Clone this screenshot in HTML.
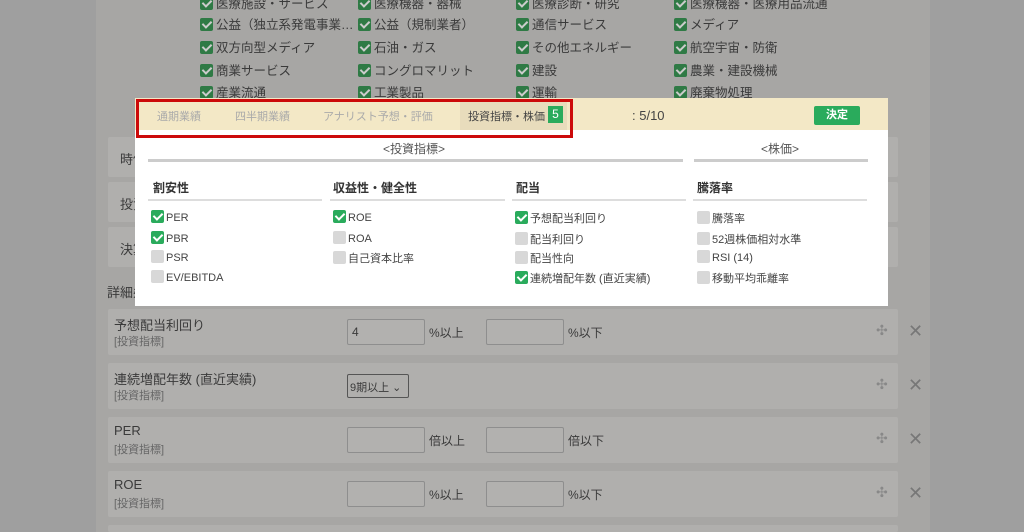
<!DOCTYPE html>
<html><head><meta charset="utf-8"><style>
*{margin:0;padding:0;box-sizing:border-box}
html,body{width:1024px;height:532px;overflow:hidden}
body{background:#9f9f9f;font-family:"Liberation Sans","Noto Sans CJK JP",sans-serif;position:relative;color:#3a3a3a}
.a{position:absolute}
.panel{left:96px;top:0;width:834px;height:532px;background:#a7a6a4}
.bg{font-size:12.5px;color:#3a3a3a;white-space:nowrap}
.gc{display:inline-block;width:13px;height:13px;background:#2f7a45;border-radius:2px;vertical-align:-2px;margin-right:3px;position:relative}
.gc:after{content:"";position:absolute;left:4px;top:1px;width:4px;height:7px;border:solid #ccc;border-width:0 2px 2px 0;transform:rotate(45deg)}
.card{left:108px;width:790px;background:#b0afad;border-radius:2px}
.inp{width:78px;height:26px;border:1px solid #8e8e8e;background:#b2b1af;border-radius:2px;font-size:12px;padding:5px 4px}
.modal{left:135px;top:98px;width:753px;height:208px;background:#fff}
.tabs{left:0;top:0;width:753px;height:32px;background:#f3e8c6;font-size:11px;color:#aaa}
.ck{display:inline-block;width:13px;height:13px;background:#d8d8d8;border-radius:2px;vertical-align:-2px;margin-right:2px;position:relative}
.ck.on{background:#2aab5c}
.ck.on:after{content:"";position:absolute;left:4px;top:1px;width:4px;height:7px;border:solid #fff;border-width:0 2px 2px 0;transform:rotate(45deg)}
.it{font-size:11px;color:#444;white-space:nowrap}
.hd{font-size:12px;font-weight:bold;color:#333}
.ul{height:2px;background:#ddd}
.mv{color:#888;font-size:14px}
.x{color:#777;font-size:18px}
</style></head><body>
<div class="a panel"></div>
<div class="a bg" style="left:200px;top:-7px"><span class="gc"></span>医療施設・サービス</div>
<div class="a bg" style="left:358px;top:-7px"><span class="gc"></span>医療機器・器械</div>
<div class="a bg" style="left:516px;top:-7px"><span class="gc"></span>医療診断・研究</div>
<div class="a bg" style="left:674px;top:-7px"><span class="gc"></span>医療機器・医療用品流通</div>
<div class="a bg" style="left:200px;top:14px"><span class="gc"></span>公益（独立系発電事業…</div>
<div class="a bg" style="left:358px;top:14px"><span class="gc"></span>公益（規制業者）</div>
<div class="a bg" style="left:516px;top:14px"><span class="gc"></span>通信サービス</div>
<div class="a bg" style="left:674px;top:14px"><span class="gc"></span>メディア</div>
<div class="a bg" style="left:200px;top:37px"><span class="gc"></span>双方向型メディア</div>
<div class="a bg" style="left:358px;top:37px"><span class="gc"></span>石油・ガス</div>
<div class="a bg" style="left:516px;top:37px"><span class="gc"></span>その他エネルギー</div>
<div class="a bg" style="left:674px;top:37px"><span class="gc"></span>航空宇宙・防衛</div>
<div class="a bg" style="left:200px;top:60px"><span class="gc"></span>商業サービス</div>
<div class="a bg" style="left:358px;top:60px"><span class="gc"></span>コングロマリット</div>
<div class="a bg" style="left:516px;top:60px"><span class="gc"></span>建設</div>
<div class="a bg" style="left:674px;top:60px"><span class="gc"></span>農業・建設機械</div>
<div class="a bg" style="left:200px;top:82px"><span class="gc"></span>産業流通</div>
<div class="a bg" style="left:358px;top:82px"><span class="gc"></span>工業製品</div>
<div class="a bg" style="left:516px;top:82px"><span class="gc"></span>運輸</div>
<div class="a bg" style="left:674px;top:82px"><span class="gc"></span>廃棄物処理</div>

<div class="a card" style="top:137px;height:40px"><span class="a" style="left:12px;top:12px;font-size:13px">時価</span></div>
<div class="a card" style="top:182px;height:40px"><span class="a" style="left:12px;top:12px;font-size:13px">投資</span></div>
<div class="a card" style="top:227px;height:40px"><span class="a" style="left:12px;top:12px;font-size:13px">決算</span></div>
<div class="a" style="left:107px;top:282px;font-size:13px">詳細条件</div>

<div class="a card" style="top:309px;height:46px">
 <div class="a" style="left:6px;top:6px;font-size:13px">予想配当利回り</div>
 <div class="a" style="left:6px;top:24px;font-size:11px;color:#666">[投資指標]</div>
 <div class="a inp" style="left:239px;top:10px">4</div><div class="a" style="left:321px;top:15px;font-size:12px">%以上</div>
 <div class="a inp" style="left:378px;top:10px"></div><div class="a" style="left:460px;top:15px;font-size:12px">%以下</div>
 <div class="a mv" style="left:768px;top:13px">✣</div>
</div>
<div class="a card" style="top:363px;height:46px">
 <div class="a" style="left:6px;top:6px;font-size:13px">連続増配年数 (直近実績)</div>
 <div class="a" style="left:6px;top:24px;font-size:11px;color:#666">[投資指標]</div>
 <div class="a" style="left:239px;top:11px;width:62px;height:24px;border:1px solid #555;border-radius:2px;font-size:11px;padding:4px 2px">9期以上 ⌄</div>
 <div class="a mv" style="left:768px;top:13px">✣</div>
</div>
<div class="a card" style="top:417px;height:46px">
 <div class="a" style="left:6px;top:6px;font-size:13px">PER</div>
 <div class="a" style="left:6px;top:24px;font-size:11px;color:#666">[投資指標]</div>
 <div class="a inp" style="left:239px;top:10px"></div><div class="a" style="left:321px;top:15px;font-size:12px">倍以上</div>
 <div class="a inp" style="left:378px;top:10px"></div><div class="a" style="left:460px;top:15px;font-size:12px">倍以下</div>
 <div class="a mv" style="left:768px;top:13px">✣</div>
</div>
<div class="a card" style="top:471px;height:46px">
 <div class="a" style="left:6px;top:6px;font-size:13px">ROE</div>
 <div class="a" style="left:6px;top:24px;font-size:11px;color:#666">[投資指標]</div>
 <div class="a inp" style="left:239px;top:10px"></div><div class="a" style="left:321px;top:15px;font-size:12px">%以上</div>
 <div class="a inp" style="left:378px;top:10px"></div><div class="a" style="left:460px;top:15px;font-size:12px">%以下</div>
 <div class="a mv" style="left:768px;top:13px">✣</div>
</div>
<div class="a card" style="top:525px;height:7px"></div>
<div class="a x" style="left:908px;top:321px">✕</div>
<div class="a x" style="left:908px;top:375px">✕</div>
<div class="a x" style="left:908px;top:429px">✕</div>
<div class="a x" style="left:908px;top:483px">✕</div>

<div class="a modal">
 <div class="a tabs">
  <span class="a" style="left:22px;top:10px">通期業績</span>
  <span class="a" style="left:100px;top:10px">四半期業績</span>
  <span class="a" style="left:188px;top:10px">アナリスト予想・評価</span>
  <div class="a" style="left:325px;top:3px;width:107px;height:29px;background:#e8dcbc"></div>
  <span class="a" style="left:333px;top:10px;color:#444;white-space:nowrap">投資指標・株価</span>
  <span class="a" style="left:413px;top:8px;width:15px;height:17px;background:#2aab5c;color:#fff;font-size:12px;text-align:center;line-height:17px">5</span>
  <span class="a" style="left:497px;top:10px;color:#444;font-size:13px">: 5/10</span>
  <div class="a" style="left:679px;top:8px;width:46px;height:19px;background:#2aab5c;color:#fff;font-size:11px;font-weight:bold;text-align:center;line-height:19px;border-radius:2px">決定</div>
 </div>
 <div class="a" style="left:1px;top:1px;width:437px;height:39px;border:3px solid #cc0a0a"></div>
 <div class="a" style="left:248px;top:42px;font-size:12px;color:#555">&lt;投資指標&gt;</div>
 <div class="a" style="left:626px;top:42px;font-size:12px;color:#555">&lt;株価&gt;</div>
 <div class="a ul" style="left:13px;top:61px;width:535px;background:#ccc;height:3px"></div>
 <div class="a ul" style="left:559px;top:61px;width:174px;background:#ccc;height:3px"></div>
 <div class="a hd" style="left:18px;top:81px">割安性</div>
 <div class="a hd" style="left:198px;top:81px">収益性・健全性</div>
 <div class="a hd" style="left:381px;top:81px">配当</div>
 <div class="a hd" style="left:562px;top:81px">騰落率</div>
 <div class="a ul" style="left:13px;top:101px;width:174px"></div>
 <div class="a ul" style="left:195px;top:101px;width:175px"></div>
 <div class="a ul" style="left:377px;top:101px;width:174px"></div>
 <div class="a ul" style="left:558px;top:101px;width:174px"></div>
 <div class="a it" style="left:16px;top:112px"><span class="ck on"></span>PER</div>
 <div class="a it" style="left:16px;top:133px"><span class="ck on"></span>PBR</div>
 <div class="a it" style="left:16px;top:152px"><span class="ck"></span>PSR</div>
 <div class="a it" style="left:16px;top:172px"><span class="ck"></span>EV/EBITDA</div>
 <div class="a it" style="left:198px;top:112px"><span class="ck on"></span>ROE</div>
 <div class="a it" style="left:198px;top:133px"><span class="ck"></span>ROA</div>
 <div class="a it" style="left:198px;top:152px"><span class="ck"></span>自己資本比率</div>
 <div class="a it" style="left:380px;top:112px"><span class="ck on"></span>予想配当利回り</div>
 <div class="a it" style="left:380px;top:133px"><span class="ck"></span>配当利回り</div>
 <div class="a it" style="left:380px;top:152px"><span class="ck"></span>配当性向</div>
 <div class="a it" style="left:380px;top:172px"><span class="ck on"></span>連続増配年数 (直近実績)</div>
 <div class="a it" style="left:562px;top:112px"><span class="ck"></span>騰落率</div>
 <div class="a it" style="left:562px;top:133px"><span class="ck"></span>52週株価相対水準</div>
 <div class="a it" style="left:562px;top:152px"><span class="ck"></span>RSI (14)</div>
 <div class="a it" style="left:562px;top:172px"><span class="ck"></span>移動平均乖離率</div>
</div>
</body></html>
